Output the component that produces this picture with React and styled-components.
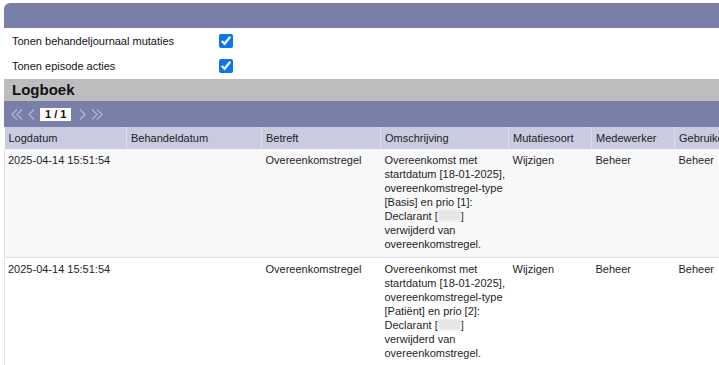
import React from 'react';
import styled, { createGlobalStyle } from 'styled-components';

const GlobalStyle = createGlobalStyle`
  html, body {
    margin: 0;
    padding: 0;
    background: #fff;
    overflow: hidden;
  }
  body {
    font-family: "Liberation Sans", Arial, sans-serif;
    font-size: 11px;
    color: #222;
  }
`;

const Page = styled.div`
  padding: 3px 0 0 4px;
  width: 715px;
  overflow: hidden;
`;

const TopBar = styled.div`
  height: 25px;
  background: #7a7fa9;
  border-top-left-radius: 6px;
`;

const Options = styled.div`
  padding-bottom: 1px;
`;

const OptionRow = styled.label`
  display: grid;
  grid-template-columns: 207px 14px;
  align-items: center;
  height: 25px;
  padding-left: 8px;
  font-size: 11px;
  color: #111;
`;

const Check = styled.input`
  width: 14px;
  height: 14px;
  margin: 0;
  accent-color: #0b75f0;
`;

const SectionTitle = styled.div`
  height: 22px;
  line-height: 22px;
  background: #bdbdbf;
  padding-left: 8px;
  font-size: 15px;
  font-weight: bold;
  color: #111;
`;

const Pager = styled.div`
  display: flex;
  align-items: center;
  height: 26px;
  background: #7a7fa9;
  padding-left: 7px;
  gap: 5px;
`;

const PageBox = styled.span`
  background: #fff;
  font-weight: bold;
  font-size: 11px;
  line-height: 13px;
  padding: 0 5px;
  color: #111;
  margin-right: 3px;
`;

const TableWrap = styled.div`
  overflow: hidden;
`;

const Table = styled.table`
  border-collapse: collapse;
  table-layout: fixed;
  width: 760px;
`;

const Th = styled.th`
  background: #c9cce0;
  height: 22px;
  padding: 0 4px;
  text-align: left;
  font-weight: normal;
  font-size: 11px;
  color: #1c1c1c;
  white-space: nowrap;
  overflow: hidden;
  border-left: 1px solid #dcdfeb;
  &:first-child {
    border-left: none;
  }
`;

const Tr = styled.tr`
  background: ${p => (p.$odd ? '#f8f8f8' : '#fff')};
  border-bottom: 1px solid #dfe2ea;
`;

const Td = styled.td`
  vertical-align: top;
  padding: 4px 4px 6px;
  line-height: 14px;
  font-size: 11px;
  color: #1e1e1e;
  white-space: nowrap;
  &:first-child {
    border-left: 1px solid #e4e4e4;
    padding-left: 3px;
  }
`;

const Line = styled.span`
  display: block;
`;

const Masked = styled.span`
  display: inline-block;
  width: 23px;
  height: 11px;
  vertical-align: -1px;
  background: #e6e6e6;
  filter: blur(1px);
`;

const Chevron = ({ dir = 'left', double }) => {
  const pts = dir === 'left' ? ['6,1 1,6 6,11', '11,1 6,6 11,11'] : ['1,1 6,6 1,11', '6,1 11,6 6,11'];
  return (
    <svg width={double ? 12 : 7} height="13" viewBox={double ? '0 0 12 12' : '0 0 7 12'}>
      <g fill="none" stroke="#adb3da" strokeWidth="1.4">
        {double ? pts.map(p => <polyline key={p} points={p} />) : <polyline points={dir === 'left' ? '6,1 1,6 6,11' : '1,1 6,6 1,11'} />}
      </g>
    </svg>
  );
};

const columns = [
  ['Logdatum', 122],
  ['Behandeldatum', 135],
  ['Betreft', 119],
  ['Omschrijving', 128],
  ['Mutatiesoort', 83],
  ['Medewerker', 83],
  ['Gebruiker', 90],
];

const rows = [
  {
    date: '2025-04-14 15:51:54',
    type: 'Basis',
    prio: '1',
  },
  {
    date: '2025-04-14 15:51:54',
    type: 'Patiënt',
    prio: '2',
  },
];

export default function App() {
  return (
    <>
      <GlobalStyle />
      <Page>
        <TopBar />
        <Options>
          <OptionRow>
            <span>Tonen behandeljournaal mutaties</span>
            <Check type="checkbox" defaultChecked />
          </OptionRow>
          <OptionRow>
            <span>Tonen episode acties</span>
            <Check type="checkbox" defaultChecked />
          </OptionRow>
        </Options>
        <SectionTitle>Logboek</SectionTitle>
        <Pager>
          <Chevron dir="left" double />
          <Chevron dir="left" />
          <PageBox>1 / 1</PageBox>
          <Chevron dir="right" />
          <Chevron dir="right" double />
        </Pager>
        <TableWrap>
          <Table>
            <colgroup>
              {columns.map(([name, w]) => <col key={name} style={{ width: w }} />)}
            </colgroup>
            <thead>
              <tr>
                {columns.map(([name]) => <Th key={name}>{name}</Th>)}
              </tr>
            </thead>
            <tbody>
              {rows.map((r, i) => (
                <Tr key={i} $odd={i % 2 === 0}>
                  <Td>{r.date}</Td>
                  <Td></Td>
                  <Td>Overeenkomstregel</Td>
                  <Td>
                    <Line>Overeenkomst met</Line>
                    <Line>startdatum [18-01-2025],</Line>
                    <Line>overeenkomstregel-type</Line>
                    <Line>[{r.type}] en prio [{r.prio}]:</Line>
                    <Line>Declarant [<Masked />]</Line>
                    <Line>verwijderd van</Line>
                    <Line>overeenkomstregel.</Line>
                  </Td>
                  <Td>Wijzigen</Td>
                  <Td>Beheer</Td>
                  <Td>Beheer</Td>
                </Tr>
              ))}
            </tbody>
          </Table>
        </TableWrap>
      </Page>
    </>
  );
}
